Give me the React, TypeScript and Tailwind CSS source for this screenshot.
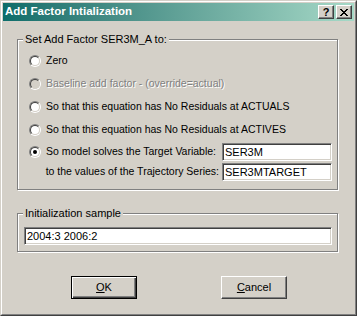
import type { ReactNode } from "react";

const font = { fontFamily: '"Liberation Sans", Arial, sans-serif' };

function Radio({ checked = false, disabled = false }: { checked?: boolean; disabled?: boolean }) {
  return (
    <div className="flex h-[12px] w-[12px] shrink-0 rounded-full border border-t-[#808080] border-l-[#808080] border-b-white border-r-white">
      <div
        className={`flex h-[10px] w-[10px] items-center justify-center rounded-full border border-t-[#404040] border-l-[#404040] border-b-[#d4d0c8] border-r-[#d4d0c8] ${
          disabled ? "bg-[#d4d0c8]" : "bg-white"
        }`}
      >
        {checked && <div className="h-[4px] w-[4px] rounded-full bg-black" />}
      </div>
    </div>
  );
}

function Field({ value, className = "" }: { value: string; className?: string }) {
  return (
    <div
      className={`flex h-[18px] items-center border border-t-[#808080] border-l-[#808080] border-b-white border-r-white bg-white pl-[2px] text-[11px] text-black shadow-[inset_1px_1px_0_#404040,inset_-1px_-1px_0_#d4d0c8] ${className}`}
    >
      {value}
    </div>
  );
}

function Group({ label, children, className = "" }: { label: string; children: ReactNode; className?: string }) {
  return (
    <fieldset
      className={`ml-[14px] w-[321px] border border-[#808080] px-[5px] shadow-[1px_1px_0_white,inset_1px_1px_0_white] ${className}`}
    >
      <legend className="bg-[#d4d0c8] px-[2px] text-[11px] leading-[13px]">{label}</legend>
      {children}
    </fieldset>
  );
}

function Button({ children, isDefault = false }: { children: ReactNode; isDefault?: boolean }) {
  return (
    <div
      className={`flex h-[23px] w-[66px] items-center justify-center border text-[11px] ${
        isDefault
          ? "border-black shadow-[inset_1px_1px_0_white,inset_-1px_-1px_0_#404040,inset_-2px_-2px_0_#808080]"
          : "border-t-white border-l-white border-b-[#404040] border-r-[#404040] shadow-[inset_-1px_-1px_0_#808080]"
      }`}
    >
      {children}
    </div>
  );
}

function TitleButton({ children }: { children: ReactNode }) {
  return (
    <div className="flex h-[14px] w-[16px] items-center justify-center border border-t-white border-l-white border-b-[#404040] border-r-[#404040] bg-[#d4d0c8] shadow-[inset_-1px_-1px_0_#808080]">
      {children}
    </div>
  );
}

const radioRows = [
  { label: "Zero" },
  { label: "Baseline add factor - (override=actual)", disabled: true },
  { label: "So that this equation has No Residuals at ACTUALS" },
  { label: "So that this equation has No Residuals at ACTIVES" },
];

export default function App() {
  return (
    <div style={font} className="h-[316px] w-[357px] overflow-hidden text-[10.5px] text-black">
      <div className="h-full border border-t-[#d4d0c8] border-l-[#d4d0c8] border-b-[#404040] border-r-[#404040]">
        <div className="h-full border border-t-white border-l-white border-b-[#808080] border-r-[#808080] bg-[#d4d0c8] p-px">
          <div className="flex h-[18px] items-center justify-between bg-gradient-to-r from-[#0b6d6a] to-[#a6d9c7] pl-[2px] pr-[2px]">
            <span className="text-[11.5px] font-bold text-white">Add Factor Intialization</span>
            <div className="flex gap-[2px]">
              <TitleButton>
                <span className="text-[11px] font-bold leading-none">?</span>
              </TitleButton>
              <TitleButton>
                <svg width="8" height="7" viewBox="0 0 8 7" shapeRendering="crispEdges">
                  <path d="M0 0h2v1h-2zM6 0h2v1h-2zM1 1h2v1h-2zM5 1h2v1h-2zM2 2h4v1h-4zM3 3h2v1h-2zM2 4h4v1h-4zM1 5h2v1h-2zM5 5h2v1h-2zM0 6h2v1h-2zM6 6h2v1h-2z" fill="black" />
                </svg>
              </TitleButton>
            </div>
          </div>

          <Group label="Set Add Factor SER3M_A to:" className="mt-[12px] pt-[3px] pb-[8px]">
            <div className="pl-[6px]">
              {radioRows.map((r) => (
                <div key={r.label} className="flex h-[23px] items-center gap-[5px] whitespace-nowrap">
                  <Radio disabled={r.disabled} />
                  <span className={r.disabled ? "text-[#808080] [text-shadow:1px_1px_0_white]" : ""}>{r.label}</span>
                </div>
              ))}
              <div className="mt-[2px] grid grid-cols-[1fr_110px] gap-y-[2px] whitespace-nowrap">
                <div className="flex h-[18px] items-center gap-[5px]">
                  <Radio checked />
                  <span>So model solves the Target Variable:</span>
                </div>
                <Field value="SER3M" />
                <div className="flex h-[18px] items-center justify-end pr-[3px]">to the values of the Trajectory Series:</div>
                <Field value="SER3MTARGET" />
              </div>
            </div>
          </Group>

          <Group label="Initialization sample" className="mt-[17px] pt-[7px] pb-[6px]">
            <Field value="2004:3 2006:2" className="ml-[1px]" />
          </Group>

          <div className="mt-[24px] flex pl-[68px]">
            <Button isDefault>
              <span>
                <span className="underline">O</span>K
              </span>
            </Button>
            <div className="ml-[84px]">
              <Button>
                <span>
                  <span className="underline">C</span>ancel
                </span>
              </Button>
            </div>
          </div>
        </div>
      </div>
    </div>
  );
}
